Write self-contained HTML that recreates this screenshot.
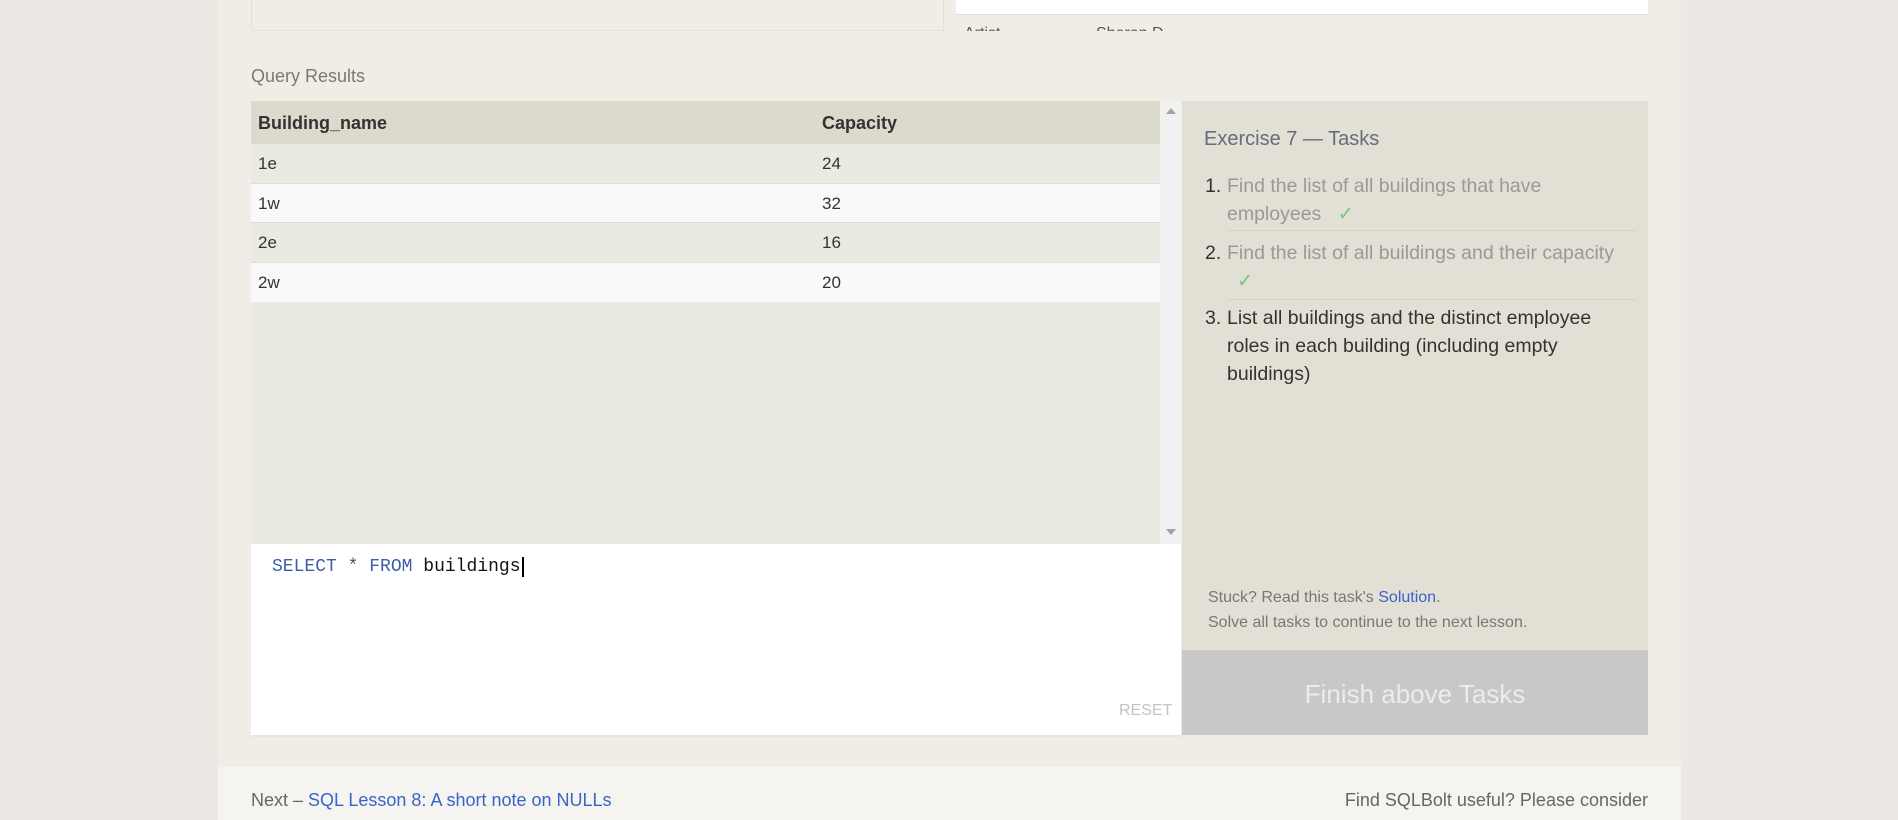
<!DOCTYPE html>
<html><head><style>
body{margin:0;width:1898px;height:820px;overflow:hidden;background:#ece9e4;font-family:"Liberation Sans",sans-serif;}
.wrap{position:absolute;left:218px;width:1463px;top:0;height:767px;background:#f0ede6;}
.foot{position:absolute;left:218px;width:1463px;top:767px;height:53px;background:#f5f4f0;}
.a{position:absolute;}
.it{display:flex;}
.it .n{width:22px;color:#333;flex:none}
</style></head><body>
<div class="wrap"></div>
<div class="foot"></div>
<div class="a" style="left:251px;top:0;width:691px;height:30px;border:1px solid #e3e0d8;border-top:none;background:#f0ede6"></div>
<div class="a" style="left:956px;top:0;width:692px;height:14px;background:#fff;border-bottom:1px solid #ddd"></div>
<div class="a" style="left:956px;top:15px;width:692px;height:16px;background:#f0ede6;overflow:hidden;font-size:16px;color:#555"><span style="position:absolute;left:8px;top:10px">Artist</span><span style="position:absolute;left:140px;top:10px">Sharon D</span></div>
<div class="a" style="left:251px;top:66px;font-size:18px;color:#7a7a72">Query Results</div>
<div class="a" style="left:251px;top:101px;width:909px;height:443px;background:#eae9e2"></div>
<div class="a" style="left:1160px;top:101px;width:21px;height:443px;background:#f1f1f1"></div>
<div class="a" style="left:1166px;top:108px;width:0;height:0;border:5px solid transparent;border-bottom:6px solid #a3a3a3;border-top:none"></div>
<div class="a" style="left:1166px;top:529px;width:0;height:0;border:5px solid transparent;border-top:6px solid #a3a3a3;border-bottom:none"></div>
<div class="a" style="left:251px;top:101px;width:909px;height:43px;background:#dbdacd;font-weight:bold;font-size:18px;color:#333">
<span style="position:absolute;left:7px;top:12px">Building_name</span><span style="position:absolute;left:571px;top:12px">Capacity</span></div>
<div class="a" style="left:251px;top:144px;width:909px;height:39px;background:#eae9e2;border-bottom:1px solid #ddd;font-size:17px;color:#333"><span style="position:absolute;left:7px;top:10px">1e</span><span style="position:absolute;left:571px;top:10px">24</span></div>
<div class="a" style="left:251px;top:184px;width:909px;height:38px;background:#f9f9f9;border-bottom:1px solid #ddd;font-size:17px;color:#333"><span style="position:absolute;left:7px;top:10px">1w</span><span style="position:absolute;left:571px;top:10px">32</span></div>
<div class="a" style="left:251px;top:223px;width:909px;height:39px;background:#eae9e2;border-bottom:1px solid #ddd;font-size:17px;color:#333"><span style="position:absolute;left:7px;top:10px">2e</span><span style="position:absolute;left:571px;top:10px">16</span></div>
<div class="a" style="left:251px;top:263px;width:909px;height:39px;background:#f9f9f9;font-size:17px;color:#333"><span style="position:absolute;left:7px;top:10px">2w</span><span style="position:absolute;left:571px;top:10px">20</span></div>
<div class="a" style="left:251px;top:544px;width:930px;height:191px;background:#fff;border-bottom:2px solid #e6e4dd"></div>
<div class="a" style="left:272px;top:557px;font-family:'Liberation Mono',monospace;font-size:18px;"><span style="color:#3d5fa8">SELECT</span> <span style="color:#555">*</span> <span style="color:#3d5fa8">FROM</span> <span style="color:#111">buildings</span><span style="border-left:2px solid #000;margin-left:1px"></span></div>
<div class="a" style="left:1119px;top:702px;font-size:16px;color:#c4c4c4">RESET</div>
<div class="a" style="left:1182px;top:101px;width:466px;height:549px;background:#e2dfd4"></div>
<div class="a" style="left:1204px;top:128px;font-size:20px;color:#666c78">Exercise 7 — Tasks</div>
<div class="a" style="left:1205px;top:172px;width:432px;font-size:19.5px;line-height:28px;color:#999">
<div class="it" style="border-bottom:1px solid #d4d1c6;margin-left:22px;padding-bottom:2px"><span class="n" style="margin-left:-22px">1.</span><span>Find the list of all buildings that have<br>employees &nbsp;&nbsp;<span style="color:#7ac77a">✓</span></span></div>
<div class="it" style="border-bottom:1px solid #d4d1c6;margin-left:22px;padding:8px 0 4px"><span class="n" style="margin-left:-22px">2.</span><span>Find the list of all buildings and their capacity<br><span style="color:#7ac77a;margin-left:10px">✓</span></span></div>
<div class="it" style="margin-left:22px;padding-top:4px;color:#333"><span class="n" style="margin-left:-22px">3.</span><span>List all buildings and the distinct employee<br>roles in each building (including empty<br>buildings)</span></div>
</div>
<div class="a" style="left:1208px;top:585px;font-size:16px;color:#777;line-height:25px">Stuck? Read this task's <span style="color:#3b64c9">Solution</span>.<br>Solve all tasks to continue to the next lesson.</div>
<div class="a" style="left:1182px;top:650px;width:466px;height:85px;background:#c8c8c8;color:#ececec;font-size:26px;text-align:center;line-height:88px">Finish above Tasks</div>
<div class="a" style="left:251px;top:790px;font-size:18px;color:#666">Next – <span style="color:#3b64c9">SQL Lesson 8: A short note on NULLs</span></div>
<div class="a" style="right:250px;top:790px;font-size:18px;color:#666">Find SQLBolt useful? Please consider</div>
</body></html>
